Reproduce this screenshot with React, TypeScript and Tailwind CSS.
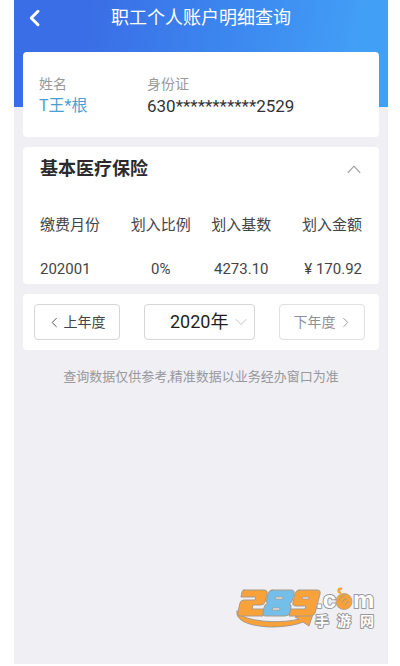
import { useState } from "react";

const columns = [
  { title: "缴费月份", align: "text-left" },
  { title: "划入比例", align: "text-center" },
  { title: "划入基数", align: "text-center" },
  { title: "划入金额", align: "text-right" },
];
const rows = [["202001", "0%", "4273.10", "¥ 170.92"]];

function Chevron({ d, className }: { d: string; className: string }) {
  return (
    <svg
      viewBox="0 0 12 12"
      className={className}
      fill="none"
      stroke="currentColor"
      strokeLinecap="round"
      strokeLinejoin="round"
      aria-hidden="true"
    >
      <path d={d} />
    </svg>
  );
}

const LEFT = "M8 1.5 3.5 6 8 10.5";
const RIGHT = "M4 1.5 8.5 6 4 10.5";
const UP = "M1 9 6 3.5 11 9";
const DOWN = "M1 3.5 6 8.5 11 3.5";

function SiteLogo() {
  return (
    <svg viewBox="0 0 140 40" className="h-10 w-[140px] overflow-visible" role="img" aria-label="289.com 手游网">
      <g strokeLinejoin="round" strokeLinecap="round" stroke="#a8998a" strokeWidth="1">
        <path d="M1 23 C-1 33 14 38 34 39 C48 39 60 37 67 34 L73 38 L78 23 L59 29 L63 31 C50 35 20 35 6 28 Z" fill="#f9a23a" />
        <path d="M8 2 H28 Q32 2 31 6 L29 14 Q28 17 25 17 H17 L16 21 H29 L27 28 H4 Q1 28 2 24 L4 15 Q5 12 8 12 H19 L20 9 H5 L6 4 Q6.500 2 8 2 Z" fill="#f9a23a" />
        <path d="M36 2 H55 Q59 2 58 6 L56 13 Q55.500 15 53 15.500 Q55.500 16 55 19 L54 24 Q53 28 49 28 H30 Q26 28 27 24 L28.500 18 Q29 16 32 15.500 Q30 15 30.500 12 L32 6 Q33 2 36 2 Z" fill="#74bfea" />
        <path d="M63 2 H81 Q85 2 84 6 L79 25 Q78 28 74 28 H53 L55 21 H69 L70 18 H60 Q56 18 57 14 L59 6 Q60 2 63 2 Z" fill="#f9a23a" />
        <path d="M40 9 H47 L46.500 11 H39.500 Z M37 20 H44 L43.500 22 H36.500 Z M67 9 H73 L72.500 11 H66.500 Z" fill="#efeff4" strokeWidth="0.800" />
      </g>
      <g
        fill="#ffffff"
        stroke="#999999"
        strokeWidth="2"
        strokeLinejoin="round"
        paintOrder="stroke"
        className="font-['Liberation_Sans','Noto_Sans_CJK_SC',sans-serif] font-bold"
      >
        <text x="80" y="20" className="text-[24px]">.c</text>
        <text x="117" y="20" className="text-[24px]">m</text>
        <text x="79 101 124" y="38" className="text-[14px]">手游网</text>
      </g>
      <circle cx="108" cy="13.500" r="8" fill="#f9a23a" stroke="#a8998a" strokeWidth="0.800" />
      <path d="M105 5 C101 4 102 0 106 1" fill="none" stroke="#f9a23a" strokeWidth="2.400" />
      <path d="M103 13 Q104 8 109 7.500 M106 15 Q107 11 111 10.500 M109 17 Q110 14 113 13.500" fill="none" stroke="#a8998a" strokeWidth="1" />
    </svg>
  );
}

export default function App() {
  const [year, setYear] = useState("2020");
  const [open, setOpen] = useState(true);

  return (
    <div className="flex min-h-screen flex-col bg-white pr-3 pb-0.5 pl-[14px] font-['Roboto','Noto_Sans_CJK_SC',sans-serif] text-[#444446]">
      <div className="flex flex-1 flex-col bg-[#efeff4]">
        <header className="h-[107px] bg-linear-[100deg] from-[#3a6ee6] from-20% via-[#3c86ef] via-55% to-[#429ff6] to-90% text-white">
          <div className="grid h-9 grid-cols-[44px_1fr_44px] items-center">
            <button type="button" aria-label="返回" className="flex h-8 items-center pl-3">
              <Chevron d={LEFT} className="size-[18px] stroke-2" />
            </button>
            <h1 className="text-center text-lg whitespace-nowrap">职工个人账户明细查询</h1>
          </div>
        </header>

        <main className="-mt-[55px] flex flex-1 flex-col px-[9px]">
          <dl className="grid h-[85px] grid-cols-[108px_1fr] content-center rounded bg-white px-4">
            <div>
              <dt className="text-sm leading-[22px] text-[#99999b]">姓名</dt>
              <dd className="text-base leading-[22px] text-[#4a9fd0]">T王*根</dd>
            </div>
            <div>
              <dt className="text-sm leading-[22px] text-[#99999b]">身份证</dt>
              <dd className="text-[17px] leading-[22px] text-[#333335]">630***********2529</dd>
            </div>
          </dl>

          <section className="mt-[10px] rounded bg-white px-[17px]">
            <div className="flex h-11 items-center justify-between">
              <h2 className="text-lg font-bold text-[#2b2b2d]">基本医疗保险</h2>
              <button type="button" aria-label="收起明细" aria-expanded={open} onClick={() => setOpen(!open)} className="pr-px text-[#a4a4a6]">
                <Chevron d={open ? UP : DOWN} className="size-[14px]" />
              </button>
            </div>
            {open && (
              <table className="w-full table-fixed whitespace-nowrap">
                <thead>
                  <tr className="h-[68px]">
                    {columns.map((c) => (
                      <th key={c.title} scope="col" className={`text-[15px] font-normal ${c.align}`}>
                        {c.title}
                      </th>
                    ))}
                  </tr>
                </thead>
                <tbody>
                  {rows.map((row) => (
                    <tr key={row[0]} className="h-[25px] align-top">
                      {row.map((value, i) => (
                        <td key={i} className={`text-[15px] leading-5 ${columns[i].align}`}>
                          {value}
                        </td>
                      ))}
                    </tr>
                  ))}
                </tbody>
              </table>
            )}
          </section>

          <div className="mt-[10px] flex h-14 items-center justify-between rounded-sm bg-white pr-[14px] pl-[11px]">
            <button type="button" className="flex h-9 w-[86px] items-center justify-center gap-1 rounded-sm border border-[#d6d6d8] text-sm">
              <Chevron d={LEFT} className="size-[11px]" />
              上年度
            </button>
            <div className="relative">
              <select
                aria-label="年度"
                value={year}
                onChange={(e) => setYear(e.target.value)}
                className="h-9 w-[111px] appearance-none rounded-sm border border-[#d6d6d8] bg-white pl-[25px] text-lg text-[#1f1f21]"
              >
                <option value="2020">2020年</option>
                <option value="2019">2019年</option>
              </select>
              <Chevron d={DOWN} className="pointer-events-none absolute top-3 right-2 size-3 text-[#c4c4c6]" />
            </div>
            <button type="button" className="flex h-9 w-[86px] items-center justify-center gap-1 rounded-sm border border-[#e0e0e2] text-sm text-[#909092]">
              下年度
              <Chevron d={RIGHT} className="size-[11px]" />
            </button>
          </div>

          <p className="mt-4 text-center text-[13px] leading-[22px] text-[#98989d]">
            查询数据仅供参考,精准数据以业务经办窗口为准
          </p>

          <div className="mt-auto mr-[3px] mb-9 self-end">
            <SiteLogo />
          </div>
        </main>
      </div>
    </div>
  );
}
